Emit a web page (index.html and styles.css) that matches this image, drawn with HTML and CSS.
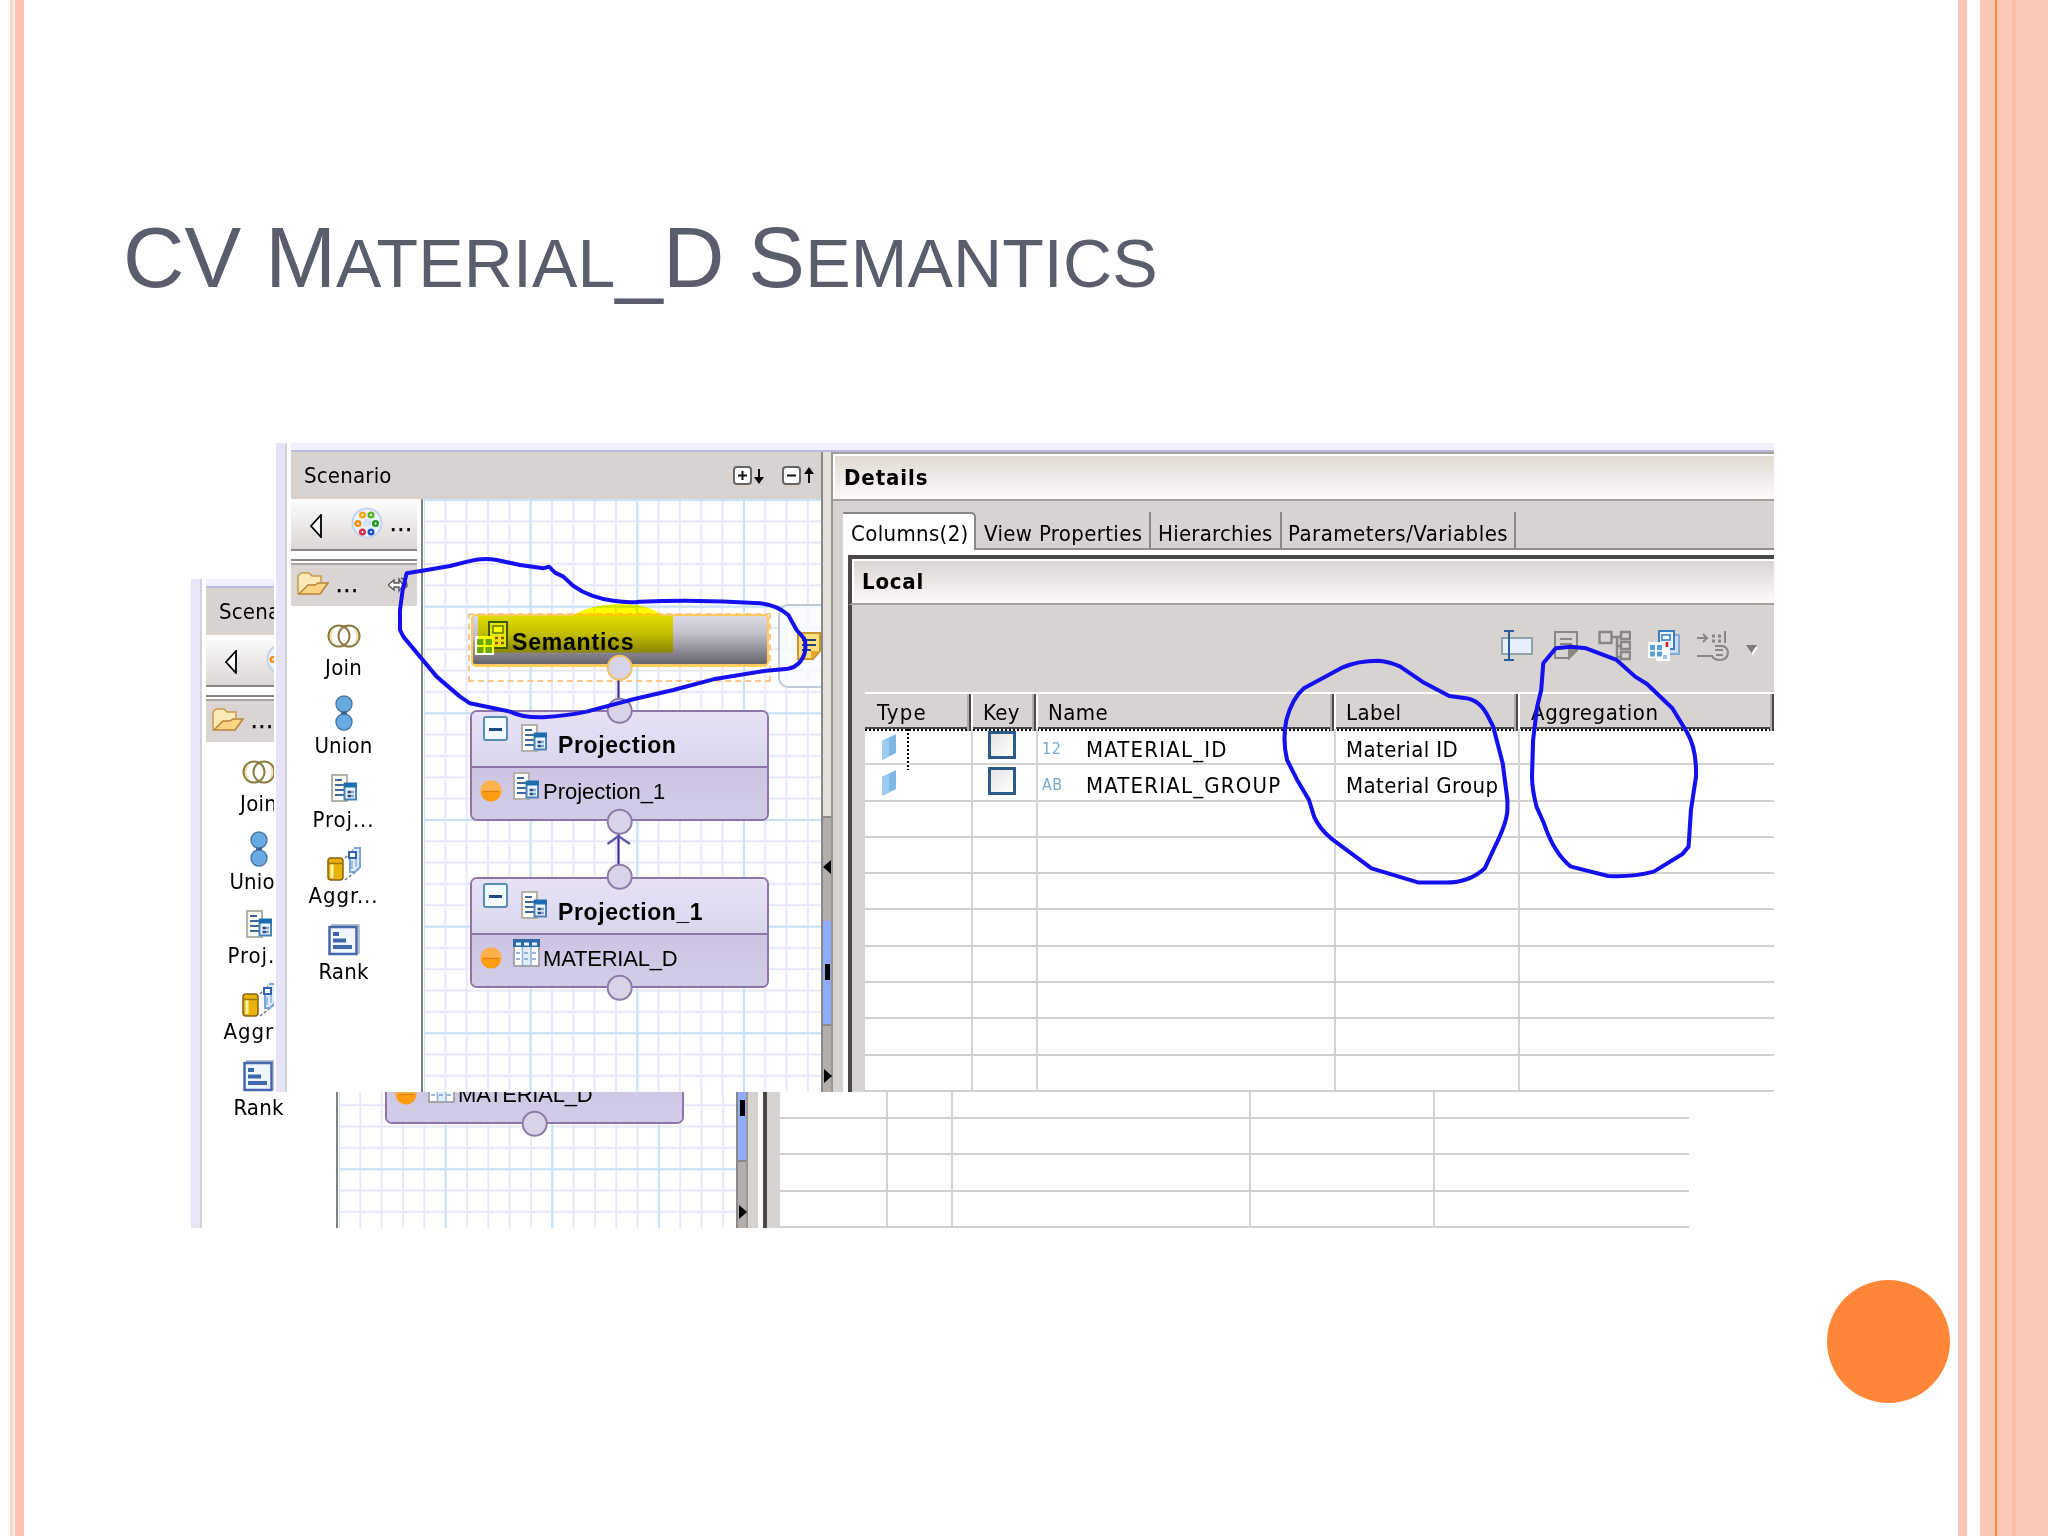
FILE: index.html
```html
<html lang="en">
<head>
	<meta charset="utf-8">
	<title>CV Material_D Semantics</title>
	<link rel="stylesheet" href="styles.css">
</head>
<body>
	<!-- icon sprite -->
	<svg class="sprite" width="0" height="0">
		<symbol id="i-palette" viewBox="0 0 32 32">
			<circle cx="16" cy="16" r="14.500" fill="#edf3fc" stroke="#c3d3ec" stroke-width="2"/>
			<circle cx="16" cy="16" r="4" fill="#d3e2f5"/>
			<g fill="#fff" stroke-width="2.500">
				<circle cx="11.500" cy="8" r="2.300" stroke="#f5a81c"/>
				<circle cx="20" cy="8" r="2.300" stroke="#5cb531"/>
				<circle cx="7" cy="16.500" r="2.300" stroke="#f58e10"/>
				<circle cx="24.500" cy="16.500" r="2.300" stroke="#239b23"/>
				<circle cx="11.500" cy="25" r="2.300" stroke="#d93048"/>
				<circle cx="20" cy="25" r="2.300" stroke="#1f55c9"/>
			</g>
		</symbol>
		<symbol id="i-folder" viewBox="0 0 32 24">
			<path d="M1 22V4l3-3h8l3 3h9v6" fill="#fbe9b8" stroke="#c99a4a" stroke-width="1.500"/>
			<path d="M2 22l9-9h7l3-2h10l-8 11z" fill="#fbd582" stroke="#b98334" stroke-width="1.500"/>
		</symbol>
		<symbol id="i-pin" viewBox="0 0 20 16">
			<path d="M0 8l6-5v3h5V2l4 6-4 6v-4H6v3z" fill="#fff" stroke="#555" stroke-width="1.300"/>
			<path d="M13 1q6 2 6 8l-4 4" fill="none" stroke="#555" stroke-width="1.500"/>
		</symbol>
		<symbol id="i-join" viewBox="0 0 34 24">
			<g fill="none" stroke="#8d7c42" stroke-width="2">
				<circle cx="12" cy="12" r="10.500"/>
				<circle cx="22" cy="12" r="10.500"/>
			</g>
			<path d="M6 6a9 9 0 0 0 0 12M28 6a9 9 0 0 1 0 12" fill="none" stroke="#f0dda0" stroke-width="1.500"/>
		</symbol>
		<symbol id="i-union" viewBox="0 0 18 36">
			<g fill="#6aaae4" stroke="#4a7aa8" stroke-width="1.500">
				<circle cx="9" cy="9" r="8"/>
				<circle cx="9" cy="27" r="8"/>
			</g>
			<path d="M6 18h6" stroke="#3c6590" stroke-width="2.500"/>
		</symbol>
		<symbol id="i-proj" viewBox="0 0 26 28">
			<rect x="1" y="1" width="15" height="26" fill="#fdfdf8" stroke="#b4b2a8" stroke-width="2"/>
			<path d="M4 6h7M4 11h9M4 16h9M4 21h9" stroke="#3d689c" stroke-width="2"/>
			<rect x="13.500" y="10" width="11.500" height="15.500" fill="#e8f3fc" stroke="#4a81b8" stroke-width="2"/>
			<path d="M13 11h13" stroke="#1c6eb0" stroke-width="5"/>
			<path d="M16.500 18h6M16.500 22h6" stroke="#2f4f86" stroke-width="2.500" stroke-dasharray="4 1"/>
		</symbol>
		<symbol id="i-aggr" viewBox="0 0 34 34">
			<path d="M18 11l9-9M18 33l14-11" stroke="#777" stroke-width="1.500" stroke-dasharray="3 2"/>
			<path d="M27 1h6v19l-5 5h-5V8" fill="#dceafa" stroke="#7fa3dc" stroke-width="2"/>
			<rect x="22" y="5" width="7" height="6" fill="#fff" stroke="#2f62b0" stroke-width="2"/>
			<path d="M25 14v8M29 12v8" stroke="#9fbfe8" stroke-width="2"/>
			<rect x="1" y="11" width="15" height="22" rx="3" fill="#e9b30c" stroke="#8a6310" stroke-width="1.500"/>
			<path d="M5 17v14" stroke="#fff3a0" stroke-width="3"/>
			<path d="M2 16.500h13" stroke="#9a7410" stroke-width="1.500"/>
		</symbol>
		<symbol id="i-rank" viewBox="0 0 32 32">
			<path d="M3 1h28v29" fill="none" stroke="#b9bdd0" stroke-width="2"/>
			<rect x="1.500" y="3" width="27" height="27" fill="#f1f5fd" stroke="#4565ad" stroke-width="2.500"/>
			<path d="M5 10h6M5 16.500h13M5 23h19" stroke="#3e66a8" stroke-width="4"/>
		</symbol>
		<symbol id="i-table" viewBox="0 0 27 28">
			<rect x="1" y="1" width="25" height="26" fill="#fff" stroke="#a5a5ad" stroke-width="2"/>
			<rect x="10" y="7" width="8" height="19" fill="#e1effc"/>
			<rect x="0" y="0" width="27" height="8" fill="#2b69a8"/>
			<path d="M3 5h5M11 5h5M19 5h5" stroke="#e8f2fc" stroke-width="3"/>
			<path d="M9.500 8v19M18 8v19" stroke="#8fb2d8" stroke-width="1.500"/>
			<path d="M3 14h21M3 20h21" stroke="#7d9cc8" stroke-width="1.500" stroke-dasharray="4 4"/>
		</symbol>
		<symbol id="i-port" viewBox="0 0 22 22">
			<circle cx="11" cy="11" r="10.500" fill="#ff9c10"/>
			<path d="M.500 11a10.500 10.500 0 0 1 21 0q-10 3-21 0" fill="#fdb14a"/>
			<path d="M3 11.500h16" stroke="#e08208" stroke-width="1.500"/>
		</symbol>
		<symbol id="i-note" viewBox="0 0 24 28">
			<path d="M1 1h22v18l-7 8H1z" fill="#fbdf7e" stroke="#c9962c" stroke-width="2"/>
			<path d="M5 8h14M5 13h14M5 18h9" stroke="#26436d" stroke-width="2"/>
			<path d="M14 27v-8h9" fill="#e3a829"/>
		</symbol>
		<symbol id="i-attr" viewBox="0 0 16 28">
			<path d="M1 8l14-7v19L1 27z" fill="#7fb8e6"/>
			<path d="M1 8l7-3.500v19L1 27z" fill="#9dcbf0"/>
		</symbol>
	</svg>

	<div class="slide">
		<div class="stripe-left"></div>
		<div class="stripe-right"></div>
		<div class="dot"></div>

		<h1>CV M<span>ATERIAL</span>_D S<span>EMANTICS</span></h1>

		<!-- rear copy, mostly covered -->
		<div class="shot shot-back">
			<div class="edge"></div>
			<div class="frame">
				<div class="scenario">
					<div class="scenario-head">Scenario</div>
					<div class="scenario-body">
						<div class="palette">
							<div class="palette-bar">
								<svg class="back-arrow" viewBox="0 0 12 24"><path d="M11 1v22L1 12z"/></svg>
								<svg class="palette-icon"><use href="#i-palette"/></svg>
							</div>
							<div class="palette-group">
								<svg class="folder"><use href="#i-folder"/></svg>
								<b>...</b>
							</div>
							<div class="tools">
								<div class="tool"><svg width="34" height="24"><use href="#i-join"/></svg><span>Join</span></div>
								<div class="tool"><svg width="18" height="36"><use href="#i-union"/></svg><span>Union</span></div>
								<div class="tool"><svg width="26" height="28"><use href="#i-proj"/></svg><span class="dots">Proj...</span></div>
								<div class="tool"><svg width="34" height="34"><use href="#i-aggr"/></svg><span class="dots">Aggr...</span></div>
								<div class="tool"><svg width="32" height="32"><use href="#i-rank"/></svg><span>Rank</span></div>
							</div>
						</div>
						<div class="canvas">
							<div class="node node-p1">
								<div class="node-head"></div>
								<div class="node-row">
									<svg class="port"><use href="#i-port"/></svg>
									<svg class="table-icon"><use href="#i-table"/></svg>
									<span>MATERIAL_D</span>
								</div>
							</div>
							<svg class="links" viewBox="424 499 397 593"><circle class="knob" cx="619.700" cy="987.700" r="12"/></svg>
						</div>
					</div>
				</div>
				<div class="sash">
					<div class="sash-top"></div>
					<div class="sash-mid"></div>
					<div class="sash-blue"><i></i></div>
					<div class="sash-end"><svg viewBox="0 0 9 14"><path d="M1 0l8 7-8 7z"/></svg></div>
				</div>
				<div class="details">
					<div class="details-head"></div>
					<div class="tabs"></div>
					<div class="panel">
						<div class="local-head"></div>
						<div class="toolbar"></div>
						<div class="grid">
							<div class="row head"></div>
							<div class="row"></div><div class="row"></div><div class="row"></div>
							<div class="row"></div><div class="row"></div><div class="row"></div>
							<div class="row"><i></i><i></i><i></i><i></i><i></i></div>
							<div class="row"><i></i><i></i><i></i><i></i><i></i></div>
							<div class="row"><i></i><i></i><i></i><i></i><i></i></div>
							<div class="row"><i></i><i></i><i></i><i></i><i></i></div>
						</div>
					</div>
				</div>
			</div>
		</div>

		<div class="shot shot-front">
			<div class="edge"></div>
			<div class="frame">
				<div class="scenario">
					<div class="scenario-head">
						Scenario
						<svg class="expanders" viewBox="0 0 82 22">
							<g fill="#fff" stroke="#666" stroke-width="2">
								<rect x="1" y="2" width="17" height="17" rx="3"/>
								<rect x="50" y="2" width="17" height="17" rx="3"/>
							</g>
							<path d="M5 10.500h9M9.500 6v9M54 10.500h9M26 4v10M76 18V8" stroke="#111" stroke-width="2"/>
							<path d="M21 12h10l-5 7zM71 9h10l-5-7z"/>
						</svg>
					</div>
					<div class="scenario-body">
						<div class="palette">
							<div class="palette-bar">
								<svg class="back-arrow" viewBox="0 0 12 24"><path d="M11 1v22L1 12z"/></svg>
								<svg class="palette-icon"><use href="#i-palette"/></svg>
								<b>...</b>
							</div>
							<div class="palette-group">
								<svg class="folder"><use href="#i-folder"/></svg>
								<b>...</b>
								<svg class="pin"><use href="#i-pin"/></svg>
							</div>
							<div class="tools">
								<div class="tool"><svg width="34" height="24"><use href="#i-join"/></svg><span>Join</span></div>
								<div class="tool"><svg width="18" height="36"><use href="#i-union"/></svg><span>Union</span></div>
								<div class="tool"><svg width="26" height="28"><use href="#i-proj"/></svg><span class="dots">Proj...</span></div>
								<div class="tool"><svg width="34" height="34"><use href="#i-aggr"/></svg><span class="dots">Aggr...</span></div>
								<div class="tool"><svg width="32" height="32"><use href="#i-rank"/></svg><span>Rank</span></div>
							</div>
						</div>

						<div class="canvas">
							<div class="selection"></div>
							<div class="hover-bar"><svg><use href="#i-note"/></svg></div>
							<div class="node-semantics">
								<svg viewBox="0 0 34 36">
									<rect x="14" y="2" width="18" height="26" fill="#e6e6e6" stroke="#3c5a10" stroke-width="2"/>
									<rect x="18" y="6" width="10" height="7" fill="#fff" stroke="#5b7a20" stroke-width="1.500"/>
									<path d="M20 18h3M26 18h3M20 23h3M26 23h3" stroke="#a05010" stroke-width="2.500"/>
									<rect x="0" y="16" width="19" height="19" fill="#fff"/>
									<path d="M2 22h15M2 30h15" stroke="#6aa70a" stroke-width="6" stroke-dasharray="6.500 2"/>
								</svg>
								<span>Semantics</span>
							</div>
							<div class="node node-p">
								<div class="node-head">
									<i class="collapse"></i>
									<svg class="proj-icon"><use href="#i-proj"/></svg>
									<span>Projection</span>
								</div>
								<div class="node-row">
									<svg class="port"><use href="#i-port"/></svg>
									<svg class="proj-icon"><use href="#i-proj"/></svg>
									<span>Projection_1</span>
								</div>
							</div>
							<div class="node node-p1">
								<div class="node-head">
									<i class="collapse"></i>
									<svg class="proj-icon"><use href="#i-proj"/></svg>
									<span>Projection_1</span>
								</div>
								<div class="node-row">
									<svg class="port"><use href="#i-port"/></svg>
									<svg class="table-icon"><use href="#i-table"/></svg>
									<span>MATERIAL_D</span>
								</div>
							</div>
							<svg class="links" viewBox="424 499 397 593">
								<path class="link" d="M618.500 680v20M618.500 833v32"/>
								<path class="link link-tip" d="M607.500 844l11-8 11.500 8"/>
								<circle class="knob knob-sel" cx="619.700" cy="667.700" r="12"/>
								<circle class="knob" cx="619.700" cy="710.700" r="12"/>
								<circle class="knob" cx="619.700" cy="821.700" r="12"/>
								<circle class="knob" cx="619.700" cy="876.700" r="12"/>
								<circle class="knob" cx="619.700" cy="987.700" r="12"/>
							</svg>
						</div>
					</div>
				</div>

				<div class="sash">
					<div class="sash-top"></div>
					<div class="sash-mid"><svg viewBox="0 0 9 14"><path d="M8 0L0 7l8 7z"/></svg></div>
					<div class="sash-blue"><i></i></div>
					<div class="sash-end"><svg viewBox="0 0 9 14"><path d="M1 0l8 7-8 7z"/></svg></div>
				</div>

				<div class="details">
					<div class="details-head">Details</div>
					<div class="tabs">
						<span class="tab active">Columns(2)</span>
						<span class="tab tab-view">View Properties</span>
						<span class="tab tab-hier">Hierarchies</span>
						<span class="tab tab-param">Parameters/Variables</span>
					</div>
					<div class="panel">
						<div class="local-head">Local</div>
						<div class="toolbar">
							<svg width="32" height="32" viewBox="0 0 32 32">
								<rect x="1" y="8" width="30" height="16" fill="#e4f1fd" stroke="#8fa3a8" stroke-width="2"/>
								<path d="M3 1h10M8 1v29M3 30h10" stroke="#2d5a9e" stroke-width="2" fill="none"/>
							</svg>
							<svg class="tb-note" width="24" height="32" viewBox="0 0 24 32" fill="none" stroke="#8a8683" stroke-width="2">
								<path d="M1 2h22v18l-8 8H1zM6 9h12M6 14h12M15 28v-8h8"/>
								<path d="M15 28v-8h8z" fill="#8a8683"/>
							</svg>
							<svg class="tb-tree" width="33" height="32" viewBox="0 0 33 32" fill="none" stroke="#8a8683" stroke-width="2.500">
								<path d="M1.500 2h12v11h-12zM14 7h8M19 7v20h3M19 16h3M23 2h9v7h-9zM23 12h9v7h-9zM23 22h9v7h-9z"/>
							</svg>
							<svg width="32" height="32" viewBox="0 0 32 32">
								<path d="M14 5h17v19H18" fill="#c8dcf3" stroke="#86a8d8" stroke-width="2"/>
								<rect x="11" y="1" width="15" height="18" fill="#e9f3fd" stroke="#3e7dc2" stroke-width="2"/>
								<rect x="14" y="5" width="8" height="5" fill="#fff" stroke="#5f97d2" stroke-width="2"/>
								<path d="M19 12v5" stroke="#d02020" stroke-width="2.500"/>
								<path d="M0 12h14v6h8v13H8v-3H0z" fill="#fff"/>
								<path d="M2 17.500h12M2 24h12" stroke="#5aa0d8" stroke-width="5" stroke-dasharray="5 2"/>
								<path d="M15 27h4" stroke="#9cc6e8" stroke-width="4"/>
							</svg>
							<svg width="32" height="32" viewBox="0 0 32 32" fill="none" stroke="#8a8683" stroke-width="2">
								<path d="M0 8h9M6 4l4 4-4 4M0 26h16M28 1v12"/>
								<path d="M15 6h3M21 6h3M15 11h3M21 11h3" stroke-width="3"/>
								<path d="M18 16h8q5 2 5 7-1 7-8 7-6 0-8-4M18 20h8M19 25h7"/>
							</svg>
							<svg class="drop" width="12" height="10" viewBox="0 0 12 10"><path d="M2 2h10l-5 8z" fill="#fff"/><path d="M0 0h11L5.500 8z" fill="#7d7976"/></svg>
						</div>
						<div class="grid">
							<div class="row head">
								<span>Type</span><span>Key</span><span>Name</span><span>Label</span><span>Aggregation</span>
							</div>
							<div class="row focused">
								<span><svg class="attr"><use href="#i-attr"/></svg></span>
								<span><i class="check"></i></span>
								<span class="name"><small>12</small>MATERIAL_ID</span>
								<span>Material ID</span>
								<span></span>
							</div>
							<div class="row">
								<span><svg class="attr"><use href="#i-attr"/></svg></span>
								<span><i class="check"></i></span>
								<span class="name"><small>AB</small>MATERIAL_GROUP</span>
								<span>Material Group</span>
								<span></span>
							</div>
							<div class="row"><i></i><i></i><i></i><i></i><i></i></div>
							<div class="row"><i></i><i></i><i></i><i></i><i></i></div>
							<div class="row"><i></i><i></i><i></i><i></i><i></i></div>
							<div class="row"><i></i><i></i><i></i><i></i><i></i></div>
							<div class="row"><i></i><i></i><i></i><i></i><i></i></div>
							<div class="row"><i></i><i></i><i></i><i></i><i></i></div>
							<div class="row"><i></i><i></i><i></i><i></i><i></i></div>
							<div class="row"><i></i><i></i><i></i><i></i><i></i></div>
						</div>
					</div>
				</div>
			</div>
		</div>

		<!-- highlighter and pen marks -->
		<svg class="marker" viewBox="0 0 2048 1536">
			<path d="M478 616h94q18-12 50-12 28 0 40 12h11v36.500H478z"/>
		</svg>
		<svg class="pen" viewBox="0 0 2048 1536">
			<path transform="translate(400 430) scale(.3333)" d="M20 430L80 420 150 408 205 394Q250 383 290 390L360 405 430 415 447 410 465 428 490 440 520 468Q570 504 640 512T720 515Q900 507 1080 520 1130 525 1165 555L1190 600 1212 625Q1220 640 1214 670 1200 710 1165 716L1100 722 940 748 820 780 700 808 560 845Q500 858 430 862 370 864 330 845L210 820 180 800 110 740 60 680 10 620 0 600V540L8 480z"/>
			<path transform="translate(1260 440) scale(.338 .3333)" d="M350 662Q290 662 245 682L130 745Q95 775 78 840 66 900 80 960L110 1020 145 1080 160 1130Q175 1165 210 1195L330 1285 470 1328H550Q620 1328 665 1285L695 1220Q730 1150 732 1110V1080L718 970 690 860 675 830Q650 780 610 775L560 768 480 725 415 680Q385 665 350 662z"/>
			<path transform="translate(1260 440) scale(.338 .3333)" d="M875 625L920 620 965 625 1055 660 1110 710 1145 732 1220 805 1265 880Q1292 930 1290 1010L1275 1110 1268 1220 1250 1242 1165 1295Q1100 1312 1030 1308L920 1280Q870 1240 840 1150L818 1100Q803 1040 805 1000L808 900 820 800 832 750 838 670z"/>
		</svg>
	</div>
</body>
</html>
```

FILE: styles.css
```css
* {
	box-sizing: border-box;
}

body {
	margin: 0;
	background: #fefefe;
}

svg {
	display: block;
	flex: none;
}

.sprite {
	position: absolute;
}

.slide {
	position: relative;
	width: 2048px;
	height: 1536px;
	overflow: hidden;
	background: #fefefe;
	color: #000;
	font: 22px/30px "DejaVu Sans Condensed", "DejaVu Sans", sans-serif;
	font-stretch: condensed;
	letter-spacing: 0.2px;
}

h1 {
	margin: 0;
	padding: 208px 0 0 123px;
	font: 85px/100px "Liberation Sans", Arial, sans-serif;
	letter-spacing: 0.15px;
	color: #5a5e6c;
	white-space: nowrap;
}

h1 span {
	font-size: 0.8em;
}

/* slide decoration */
.stripe-left {
	position: absolute;
	left: 10px;
	top: 0;
	width: 14px;
	height: 100%;
	background: linear-gradient(to right, #fdd3c6 0 3px, #fff6f2 3px 5px, #ffc2b1 5px);
}

.stripe-right {
	position: absolute;
	right: 0;
	top: 0;
	width: 90px;
	height: 100%;
	background: linear-gradient(to right, #fdc7b8 0 9px, #fff 9px 22px, #fbc9b7 22px 37px, #f6893d 37px 39.5px, #fbc9b7 39.5px 54px, #fbbca7 54px 58px, #fbcab7 58px);
}

.dot {
	position: absolute;
	left: 1827px;
	top: 1280px;
	width: 123px;
	height: 123px;
	border-radius: 50%;
	background: #ff8737;
}

/* screenshots */
.shot {
	position: absolute;
	display: flex;
	width: 1500px;
	height: 649px;
	border-left: 2px solid #fff;
	background: #fff;
	overflow: hidden;
}

.shot-back {
	left: 189px;
	top: 579px;
}

.shot-front {
	left: 274px;
	top: 443px;
}

.edge {
	flex: none;
	width: 11px;
	margin-right: 4px;
	background: #e6e4f6;
	border-right: 2px solid #d3d0d6;
}

.frame {
	flex: 1;
	display: flex;
	min-width: 0;
	border-top: 7px solid #f2efff;
	box-shadow: inset 0 2px #babada;
	padding-top: 2px;
}

.scenario {
	flex: none;
	width: 530px;
	display: flex;
	flex-direction: column;
}

.scenario-head {
	display: flex;
	justify-content: space-between;
	align-items: center;
	height: 47px;
	padding: 1px 6px 0 13px;
	background: #d8d3cf;
}

.expanders {
	width: 82px;
	height: 22px;
}

.scenario-body {
	flex: 1;
	display: flex;
}

.palette {
	width: 132px;
	border-right: 2px solid #808080;
	padding-right: 4px;
}

.palette b {
	font-weight: 400;
	letter-spacing: 1.5px;
	-webkit-text-stroke: 0.6px #000;
}

.palette-bar {
	display: flex;
	height: 52px;
	padding: 8px 0 0 19px;
	background: linear-gradient(#fefefe, #dad6d4);
	border-bottom: 2px solid #8a8583;
}

.palette-bar b {
	margin: 2px 0 0 7px;
}

.back-arrow {
	width: 12px;
	height: 24px;
	margin: 7px 29px 0 0;
	fill: #fff;
	stroke: #000;
	stroke-width: 1.8;
}

.palette-icon {
	width: 32px;
	height: 32px;
}

.palette-group {
	display: flex;
	height: 47px;
	margin-top: 8px;
	padding: 9px 0 0 6px;
	background: #dad4d2;
	border-top: 2px solid #8a8583;
	box-shadow: inset 0 2px #fff, inset 0 4px #a9a4a2;
}

.palette-group b {
	margin-left: 7px;
}

.folder {
	width: 32px;
	height: 24px;
	margin-top: 2px;
}

.pin {
	width: 20px;
	height: 16px;
	margin: 7px 0 0 29px;
}

.tools {
	padding: 13px 21px 0 0;
}

.tool {
	display: flex;
	flex-direction: column;
	align-items: center;
	height: 76px;
}

.tool svg {
	margin: auto 0;
}

.tool span {
	height: 42px;
}

.tool .dots {
	letter-spacing: 0.9px;
}

/* graph paper, major line every five cells */
.canvas {
	position: relative;
	flex: 1;
	border-left: 1px solid #fff;
	background:
		linear-gradient(to right, #c6e3f8 2px, transparent 2px) -1px 0 / 106.67px 100%,
		linear-gradient(#c6e3f8 2px, transparent 2px) 0 0 / 100% 106.67px,
		linear-gradient(to right, #e7e7fb 2px, transparent 2px) -1px 0 / 21.334px 100%,
		linear-gradient(#e7e7fb 2px, transparent 2px) 0 0 / 100% 21.334px,
		#fff;
}

.selection {
	position: absolute;
	left: 44px;
	top: 114px;
	width: 303px;
	height: 69px;
	border: 2px dashed #fbc889;
}

.hover-bar {
	position: absolute;
	left: 354px;
	top: 105px;
	width: 43px;
	height: 84px;
	padding: 26px 0 0 17px;
	border: 2px solid #bfcbdc;
	border-right: 0;
	border-radius: 10px 0 0 10px;
	background: rgba(248, 250, 255, 0.8);
	overflow: hidden;
}

.hover-bar svg {
	width: 24px;
	height: 28px;
}

.node-semantics {
	position: absolute;
	left: 47px;
	top: 115px;
	width: 298px;
	height: 53px;
	display: flex;
	padding: 4px 0 0 2px;
	border: 2px solid #ffcb5c;
	border-bottom-width: 3px;
	border-radius: 5px;
	background: linear-gradient(#dedae6, #c5c1cb 35%, #67646c);
	font: bold 23px/42px "Liberation Sans", Arial, sans-serif;
	letter-spacing: 0.8px;
}

.node-semantics svg {
	width: 34px;
	height: 36px;
}

.node-semantics span {
	margin: 1px 0 0 3px;
}

.node {
	position: absolute;
	left: 46px;
	width: 299px;
	height: 111px;
	border: 2px solid #8d74aa;
	border-radius: 7px;
	overflow: hidden;
	font: 22px/51px "Liberation Sans", Arial, sans-serif;
	letter-spacing: 0;
}

.node-p {
	top: 211px;
}

.node-p1 {
	top: 378px;
}

.node-head {
	display: flex;
	height: 56px;
	padding-left: 11px;
	border-bottom: 2px solid #8d74aa;
	background: linear-gradient(#e8e1f6, #d9d7ec);
	font-weight: bold;
	font-size: 23px;
	letter-spacing: 0.6px;
}

.node-head span {
	margin: 8px 0 0 11px;
}

.collapse {
	width: 25px;
	height: 25px;
	margin: 4px 13px 0 0;
	border: 2px solid #5590b4;
	border-radius: 3px;
	background: linear-gradient(#1b4b82, #1b4b82) center 10px / 13px 3px no-repeat, #f6fbff;
}

.proj-icon {
	width: 26px;
	height: 28px;
}

.node-head .proj-icon {
	margin-top: 12px;
}

.node-row {
	display: flex;
	height: 51px;
	padding-left: 8px;
	background: linear-gradient(#cdc4e2, #d2cde6);
	line-height: 48px;
}

.port {
	width: 22px;
	height: 22px;
	margin: 12px 11px 0 0;
}

.node-row .proj-icon,
.table-icon {
	margin: 4px 4px 0 0;
}

.table-icon {
	width: 27px;
	height: 28px;
}

.table-icon + span {
	margin-left: -1px;
	letter-spacing: -0.2px;
}

.links {
	position: absolute;
	left: 0;
	top: 0;
	width: 397px;
	height: 593px;
}

.link {
	fill: none;
	stroke: #3e2c98;
	stroke-width: 2.2;
}

.link-tip {
	stroke: #5c56ac;
}

.knob {
	fill: #d9d3ea;
	stroke: #8d7ca6;
	stroke-width: 2;
}

.knob-sel {
	stroke: #f0c262;
}

/* divider between the two views */
.sash {
	flex: none;
	width: 12px;
	display: flex;
	flex-direction: column;
	border-left: 2px solid #8a8885;
	border-right: 2px solid #9b9794;
	background: #b3aea9;
}

.sash-top {
	height: 366px;
	background: #e3e2da;
	border-bottom: 2px solid #8c8884;
}

.sash-mid {
	height: 103px;
	padding-top: 42px;
}

.sash svg {
	width: 9px;
	height: 14px;
}

.sash-blue {
	height: 105px;
	padding: 43px 0 0 2px;
	background: #8eabff;
	border-bottom: 2px solid #8c8884;
}

.sash-blue i {
	display: block;
	width: 5px;
	height: 16px;
	background: #000;
}

.sash-end {
	padding-top: 43px;
}

.details {
	flex: 1;
	min-width: 0;
	display: flex;
	flex-direction: column;
	background: #d7d3d0;
}

.details-head {
	height: 49px;
	padding-left: 11px;
	border-top: 2px solid #a5a1a1;
	border-bottom: 2px solid #a5a0a0;
	box-shadow: inset 2px 2px #fff;
	background: linear-gradient(#ded8d0, #fffafa);
	font-weight: bold;
	line-height: 47px;
	letter-spacing: 0.9px;
}

.tabs {
	display: flex;
	height: 49px;
	margin-left: 10px;
	padding-top: 11px;
	box-shadow: inset 0 -2px #908c8a;
	line-height: 44px;
}

.tab {
	height: 36px;
	border-right: 2px solid #8b8785;
	white-space: nowrap;
}

.tab.active {
	width: 133px;
	height: 38px;
	padding-left: 8px;
	border-top: 2px solid #8b8785;
	border-top-right-radius: 5px;
	background: #fff;
	line-height: 40px;
	letter-spacing: 0.35px;
}

.tab-view {
	width: 175px;
	padding-left: 8px;
	letter-spacing: 0.35px;
}

.tab-hier {
	width: 131px;
	padding-left: 7px;
	letter-spacing: 0.25px;
}

.tab-param {
	width: 234px;
	padding-left: 6px;
	letter-spacing: 0.5px;
}

.panel {
	flex: 1;
	margin-left: 10px;
	padding: 5px 0 0 5px;
	background: #fff;
}

.local-head {
	height: 50px;
	padding-left: 10px;
	border-top: 4px solid #4a4746;
	border-left: 4px solid #4a4746;
	border-bottom: 2px solid #a5a0a0;
	box-shadow: inset 2px 2px #fff;
	background: linear-gradient(#d8d3d0, #fffafa);
	font-weight: bold;
	line-height: 46px;
	letter-spacing: 0.8px;
}

.toolbar {
	display: flex;
	justify-content: flex-end;
	gap: 17px;
	height: 87px;
	padding: 25px 16px 0 0;
	border-left: 4px solid #4a4746;
	background: #d7d3d0;
}

.tb-note {
	margin-left: 4px;
}

.tb-tree {
	margin-left: 3px;
}

.toolbar .drop {
	margin-top: 15px;
}

.grid {
	padding-left: 13px;
	border-left: 4px solid #4a4746;
	background: #d7d3d0;
}

.row {
	display: grid;
	grid-template-columns: 108px 65px 298px 184px 1fr;
	height: 36.3px;
	border-bottom: 2px solid #d3d0d0;
	background: #fefefe;
	line-height: 41px;
}

.row > * {
	padding-left: 10px;
	border-right: 2px solid #d6d2d2;
	white-space: nowrap;
	letter-spacing: 0.4px;
}

.row > :last-child {
	border-right: 0;
}

.row.head {
	height: 37px;
	border-top: 2px solid #fff;
	border-bottom: 2px solid #484544;
	background: #d7d3d0;
	line-height: 37px;
}

.row.head > * {
	padding-left: 10px;
	border-right: 2px solid #fff;
	box-shadow: inset -2px 0 #4a4746, inset -4px 0 #b0acaa;
}

.row.head > :first-child {
	padding-left: 12px;
	letter-spacing: 1.2px;
}

.row.head > :last-child {
	padding-left: 11px;
	border-right: 0;
	letter-spacing: 0.6px;
}

/* keyboard focus rectangle */
.focused {
	background: repeating-linear-gradient(to right, #000 0 2px, #fff 2px 4px) 0 0 / 100% 2px no-repeat, #fefefe;
}

.focused > :first-child {
	background: repeating-linear-gradient(#000 0 2px, #fff 2px 4px) 42px 0 / 2px 100% no-repeat;
}

.attr {
	width: 16px;
	height: 28px;
	margin: 4px 0 0 6px;
}

.check {
	display: block;
	width: 28px;
	height: 28px;
	margin: 2px 0 0 5px;
	border: 3px solid #2b5c88;
	background: linear-gradient(135deg, #e4e4e4, #fff);
}

.row .name {
	padding-left: 4px;
	letter-spacing: 1.2px;
}

.name small {
	display: inline-block;
	width: 44px;
	color: #7ba9cb;
	font: 16px/20px "DejaVu Sans Condensed", "DejaVu Sans", sans-serif;
	letter-spacing: 0.5px;
	vertical-align: 3px;
}

.marker,
.pen {
	position: absolute;
	left: 0;
	top: 0;
	width: 2048px;
	height: 1536px;
}

.marker {
	fill: #ff0;
	mix-blend-mode: multiply;
}

.pen {
	fill: none;
	stroke: #1410f0;
	stroke-width: 12;
	stroke-linejoin: round;
}
```
